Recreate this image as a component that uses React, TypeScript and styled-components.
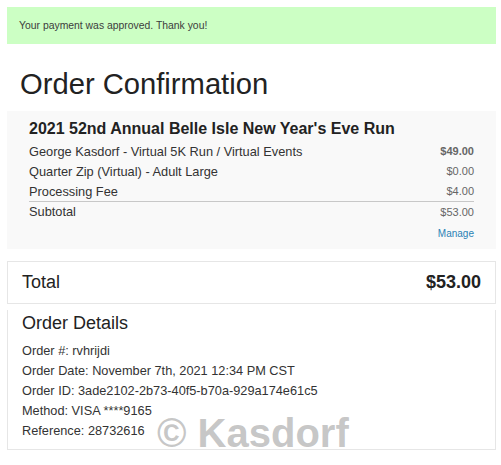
import React from "react";
import styled, { createGlobalStyle } from "styled-components";

const GlobalStyle = createGlobalStyle`
  * {
    margin: 0;
    padding: 0;
    box-sizing: border-box;
  }
  body {
    background: #fff;
    font-family: "Liberation Sans", Arial, sans-serif;
    color: #333;
  }
`;

const Page = styled.div`
  position: relative;
  width: 501px;
  height: 465px;
  padding: 7px 5px 0 7px;
  overflow: hidden;
`;

const Alert = styled.div`
  height: 37px;
  display: flex;
  align-items: center;
  padding: 0 12px;
  background: #ccffc4;
  font-size: 10.4px;
  color: #3c3c3c;
`;

const Title = styled.h1`
  margin: 22px 0 9px 13px;
  font-size: 29.2px;
  font-weight: 400;
  line-height: 36px;
  color: #222;
`;

const Cart = styled.div`
  background: #f9f9f9;
  padding: 8px 22px 9px 22px;
`;

const EventName = styled.h2`
  font-size: 16px;
  font-weight: 700;
  line-height: 20px;
  margin-bottom: 2px;
  color: #222;
`;

const Line = styled.div<{ $divider?: boolean }>`
  display: flex;
  justify-content: space-between;
  align-items: center;
  height: 20px;
  font-size: 12.8px;
  color: #333;
  border-top: ${(p) => (p.$divider ? "1px solid #c8c8c8" : "none")};
`;

const Price = styled.span<{ $bold?: boolean }>`
  font-size: 11px;
  font-weight: ${(p) => (p.$bold ? 700 : 400)};
  color: #666;
`;

const ManageRow = styled.div`
  display: flex;
  justify-content: flex-end;
  margin-top: 7px;
  font-size: 10px;
  line-height: 12px;
`;

const ManageLink = styled.a`
  color: #2a82b5;
  text-decoration: none;
`;

const TotalBox = styled.div`
  margin-top: 12px;
  height: 43px;
  display: flex;
  justify-content: space-between;
  align-items: center;
  padding: 0 14px;
  border: 1px solid #e6e6e6;
  font-size: 18px;
  color: #222;
`;

const TotalAmount = styled.span`
  font-weight: 700;
`;

const Details = styled.div`
  margin-top: 6px;
  padding: 1px 14px 8px;
  border: 1px solid #e6e6e6;
  border-top: none;
`;

const DetailsTitle = styled.h3`
  font-size: 18px;
  font-weight: 400;
  line-height: 24px;
  color: #222;
  margin-bottom: 6px;
`;

const DetailLine = styled.div`
  font-size: 12.75px;
  line-height: 20px;
  color: #333;
`;

const Watermark = styled.div`
  position: absolute;
  left: 157px;
  top: 411px;
  font-size: 40px;
  font-weight: 700;
  color: rgba(150, 150, 150, 0.55);
  pointer-events: none;
`;

const App = () => {
  return (
    <>
      <GlobalStyle />
      <Page>
        <Alert>Your payment was approved. Thank you!</Alert>
        <Title>Order Confirmation</Title>
        <Cart>
          <EventName>2021 52nd Annual Belle Isle New Year's Eve Run</EventName>
          <Line>
            <span>George Kasdorf - Virtual 5K Run / Virtual Events</span>
            <Price $bold>$49.00</Price>
          </Line>
          <Line>
            <span>Quarter Zip (Virtual) - Adult Large</span>
            <Price>$0.00</Price>
          </Line>
          <Line>
            <span>Processing Fee</span>
            <Price>$4.00</Price>
          </Line>
          <Line $divider>
            <span>Subtotal</span>
            <Price>$53.00</Price>
          </Line>
          <ManageRow>
            <ManageLink href="#">Manage</ManageLink>
          </ManageRow>
        </Cart>
        <TotalBox>
          <span>Total</span>
          <TotalAmount>$53.00</TotalAmount>
        </TotalBox>
        <Details>
          <DetailsTitle>Order Details</DetailsTitle>
          <DetailLine>Order #: rvhrijdi</DetailLine>
          <DetailLine>Order Date: November 7th, 2021 12:34 PM CST</DetailLine>
          <DetailLine>Order ID: 3ade2102-2b73-40f5-b70a-929a174e61c5</DetailLine>
          <DetailLine>Method: VISA ****9165</DetailLine>
          <DetailLine>Reference: 28732616</DetailLine>
        </Details>
        <Watermark>© Kasdorf</Watermark>
      </Page>
    </>
  );
};

export default App;
